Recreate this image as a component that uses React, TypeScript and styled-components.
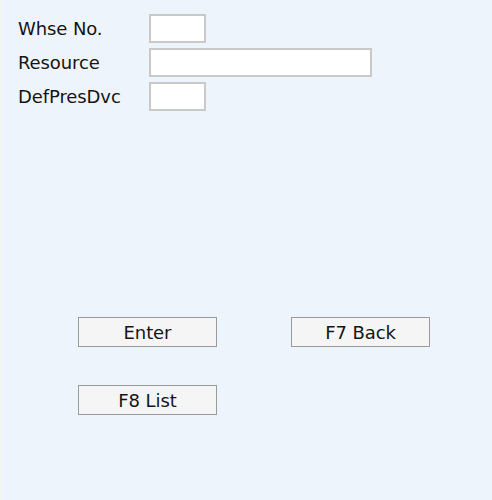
import styled, { createGlobalStyle } from "styled-components"

const GlobalStyle = createGlobalStyle`
  html, body {
    margin: 0;
    padding: 0;
    background: #eef4fc;
  }
  body {
    font-family: "DejaVu Sans", "Liberation Sans", sans-serif;
    color: #141414;
  }
`

const Screen = styled.div`
  width: 492px;
  height: 500px;
  box-sizing: border-box;
  background: #eef4fc;
  border-left: 3px solid #f3f4f6;
  padding: 14px 0 0 15px;
  display: flex;
  flex-direction: column;
`

const Form = styled.div`
  display: grid;
  grid-template-columns: 131px auto;
  grid-auto-rows: 29px;
  row-gap: 5px;
  align-items: center;
`

const Label = styled.label`
  font-size: 18px;
  line-height: 29px;
  letter-spacing: -0.1px;
`

const Field = styled.input<{ $wide?: boolean }>`
  width: ${(p) => (p.$wide ? "223px" : "57px")};
  height: 29px;
  box-sizing: border-box;
  margin: 0;
  padding: 0 4px;
  border: 2px solid #c9c9c9;
  background: #ffffff;
  font: inherit;
  font-size: 15px;
  outline: none;
`

const Buttons = styled.div`
  display: grid;
  grid-template-columns: 139px 139px;
  grid-auto-rows: 30px;
  column-gap: 74px;
  row-gap: 38px;
  margin: 206px 0 0 60px;
`

const Key = styled.button`
  height: 30px;
  box-sizing: border-box;
  margin: 0;
  padding: 0;
  border: 1px solid #9a9a9a;
  background: #f5f5f5;
  font-family: inherit;
  font-size: 18px;
  letter-spacing: -0.1px;
  color: #141414;
  cursor: pointer;
`

export default function App() {
  return (
    <>
      <GlobalStyle />
      <Screen>
        <Form>
          <Label>Whse No.</Label>
          <Field />
          <Label>Resource</Label>
          <Field $wide />
          <Label>DefPresDvc</Label>
          <Field />
        </Form>
        <Buttons>
          <Key>Enter</Key>
          <Key>F7 Back</Key>
          <Key>F8 List</Key>
        </Buttons>
      </Screen>
    </>
  )
}
